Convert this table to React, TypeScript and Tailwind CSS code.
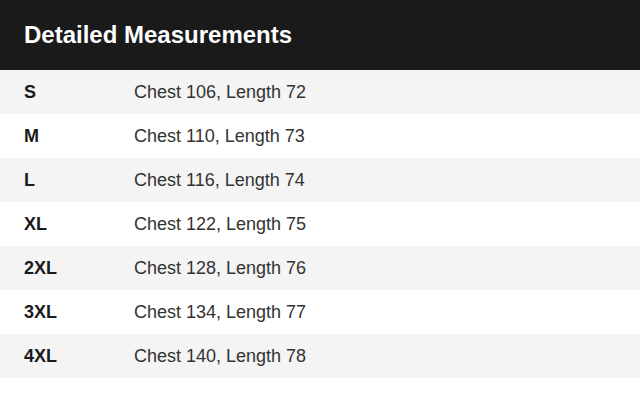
const rows = [
  { size: "S", text: "Chest 106, Length 72" },
  { size: "M", text: "Chest 110, Length 73" },
  { size: "L", text: "Chest 116, Length 74" },
  { size: "XL", text: "Chest 122, Length 75" },
  { size: "2XL", text: "Chest 128, Length 76" },
  { size: "3XL", text: "Chest 134, Length 77" },
  { size: "4XL", text: "Chest 140, Length 78" },
];

export default function App() {
  return (
    <div className="w-[640px] h-[402px] bg-white font-['Liberation_Sans',Arial,sans-serif]">
      <div className="h-[70px] bg-[#1a1a1a] px-6 flex items-center">
        <h1 className="text-2xl leading-none font-bold text-white">Detailed Measurements</h1>
      </div>
      <div>
        {rows.map((r, i) => (
          <div
            key={r.size}
            className={`h-11 px-6 flex items-center text-lg leading-none ${i % 2 === 0 ? "bg-[#f4f4f4]" : "bg-white"}`}
          >
            <span className="w-[110px] font-bold text-[#1a1a1a]">{r.size}</span>
            <span className="text-[#333333]">{r.text}</span>
          </div>
        ))}
      </div>
    </div>
  );
}
